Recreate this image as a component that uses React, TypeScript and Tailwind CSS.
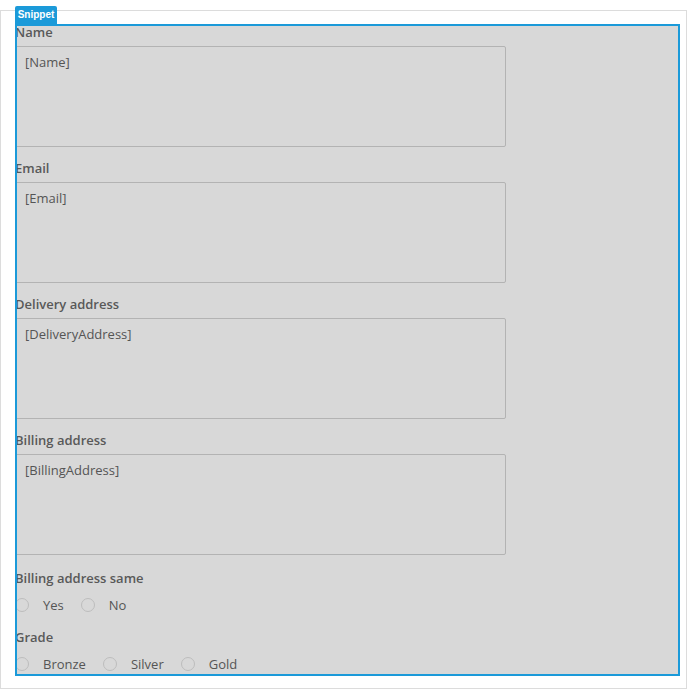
const font = { fontFamily: '"Open Sans", "Liberation Sans", sans-serif' };

function Field({ label, value, first }) {
  return (
    <div>
      <div className={`${first ? "mt-0" : "mt-[15px]"} text-[13px] leading-[13px] font-semibold text-[#595959] whitespace-nowrap`}>
        {label}
      </div>
      <textarea
        readOnly
        defaultValue={value}
        className="mt-[7px] block h-[101px] w-[491px] resize-none rounded-[2px] border border-[#b3b3b3] bg-transparent px-[9px] pt-[6px] text-[13px] leading-[18px] text-[#555] outline-none"
        style={font}
      />
    </div>
  );
}

function Radio({ label }) {
  return (
    <div className="flex items-center gap-[14px] mr-[17px]">
      <span className="block h-[14px] w-[14px] rounded-full border border-[#bdbdbd]" />
      <span className="text-[13px] leading-[14px] text-[#555]">{label}</span>
    </div>
  );
}

function RadioGroup({ label, options }) {
  return (
    <div className="pb-[2px]">
      <div className="mt-[17px] text-[13px] leading-[13px] font-semibold text-[#595959] whitespace-nowrap">{label}</div>
      <div className="mt-[13px] flex items-center">
        {options.map((o) => (
          <Radio key={o} label={o} />
        ))}
      </div>
    </div>
  );
}

export default function App() {
  return (
    <div className="w-[689px] h-[690px] bg-white pt-[10px]" style={font}>
      <div className="w-[687px] h-[679px] border border-[#dcdcdc]">
        <div className="-mt-[5px] pl-[14px]">
          <div
            className="w-[42px] h-[18px] rounded-t-[2px] bg-[#1b9ad9] text-white text-[10px] font-bold leading-[18px] text-center"
            style={{ fontFamily: '"Liberation Sans", Arial, sans-serif' }}
          >
            Snippet
          </div>
          <div className="w-[665px] h-[652px] border-2 border-[#1b9ad9] bg-[#d8d8d8] overflow-hidden">
            <div className="-ml-[2px]">
              <Field label="Name" value="[Name]" first />
              <Field label="Email" value="[Email]" />
              <Field label="Delivery address" value="[DeliveryAddress]" />
              <Field label="Billing address" value="[BillingAddress]" />
              <RadioGroup label="Billing address same" options={["Yes", "No"]} />
              <RadioGroup label="Grade" options={["Bronze", "Silver", "Gold"]} />
            </div>
          </div>
        </div>
      </div>
    </div>
  );
}
